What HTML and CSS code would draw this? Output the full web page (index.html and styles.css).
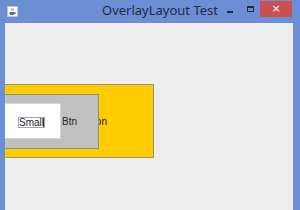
FILE: index.html
```html
<!DOCTYPE html>
<html>
<head>
<meta charset="utf-8">
<link rel="stylesheet" href="styles.css">
</head>
<body>
<div class="window">
  <div class="titlebar">
    <div class="app-icon">
      <svg width="11" height="11" viewBox="0 0 11 11">
        <rect x="0.5" y="0.5" width="10" height="10" fill="#ffffff" stroke="#b8c4dc"/>
        <path d="M5 2 C4 3 6 3.5 5 5" stroke="#e07a20" stroke-width="1" fill="none"/>
        <path d="M6.5 2.5 C5.8 3.3 7 3.8 6.3 4.8" stroke="#e07a20" stroke-width="0.8" fill="none"/>
        <path d="M2.5 6 H7.5 V7.5 C7.5 8.5 6.5 9 5 9 C3.5 9 2.5 8.5 2.5 7.5 Z" fill="#4a6fa8"/>
        <path d="M7.5 6.5 H8.6 V7.6 H7.5" stroke="#4a6fa8" stroke-width="0.8" fill="none"/>
      </svg>
    </div>
    <div class="title">OverlayLayout Test</div>
    <div class="controls">
      <div class="ctl min"><span class="dash"></span></div>
      <div class="ctl max"><span class="box"></span></div>
      <div class="ctl close">×</div>
    </div>
  </div>
  <div class="client">
    <div class="overlay">
      <div class="layer big"><span class="label">Button</span></div>
      <div class="layer mid"><span class="label">Btn</span></div>
      <div class="layer small"><span class="field">Small<span class="caret"></span></span></div>
    </div>
  </div>
</div>
</body>
</html>
```

FILE: styles.css
```css
* { box-sizing: border-box; }
html, body { margin: 0; padding: 0; }
body { width: 300px; height: 210px; overflow: hidden; font-family: "Liberation Sans", Arial, sans-serif; }

.window {
  width: 300px;
  height: 210px;
  background: #6b8ed5;
  display: flex;
  flex-direction: column;
}

.titlebar {
  height: 23px;
  display: flex;
  align-items: flex-start;
  flex: none;
}

.app-icon {
  width: 11px;
  height: 11px;
  margin: 6px 0 0 7px;
  display: flex;
}

.title {
  flex: 1;
  text-align: center;
  font-family: "Noto Sans", "Open Sans", sans-serif;
  font-size: 13px;
  line-height: 15px;
  margin-top: 3px;
  padding-left: 75px;
  color: #1f2b46;
  white-space: nowrap;
}

.controls {
  display: flex;
  align-items: flex-start;
  margin-right: 8px;
}

.ctl {
  display: flex;
  justify-content: flex-start;
}

.min {
  width: 20px;
  height: 16px;
  padding-top: 11px;
}
.min .dash {
  width: 6px;
  height: 2px;
  background: #1f2b46;
}

.max {
  width: 13px;
  height: 16px;
  padding-top: 6px;
}
.max .box {
  width: 7px;
  height: 6px;
  border: 1px solid #1f2b46;
  border-top-width: 2px;
}

.close {
  width: 32px;
  height: 16px;
  margin-top: 1px;
  background: #c9504f;
  color: #ffffff;
  justify-content: center;
  font-family: "DejaVu Sans", sans-serif;
  font-size: 11px;
  line-height: 15px;
}

.client {
  flex: 1;
  margin: 0 7px 0 5px;
  background: #eeeeee;
  overflow: hidden;
}

.overlay {
  display: grid;
  grid-template-columns: auto;
  grid-template-rows: 74px;
  margin-top: 61px;
  margin-left: -40px;
  width: 189px;
}

.layer {
  grid-area: 1 / 1;
  justify-self: start;
  align-self: center;
  display: flex;
  align-items: center;
  justify-content: flex-end;
  font-size: 10px;
  line-height: 12px;
  color: #1a1a1a;
}

.big {
  width: 189px;
  height: 74px;
  background: #ffcc00;
  border: 1px solid #9c9478;
  padding-right: 46px;
}
.big .label { padding-top: 2px; }

.mid {
  width: 134px;
  height: 55px;
  background: #c0c0c0;
  border: 1px solid #8e8e8e;
  padding-right: 21px;
}
.mid .label { padding-top: 2px; color: #262626; }

.small {
  width: 96px;
  height: 36px;
  background: #ffffff;
  border: 1px solid #d4d4d4;
  border-left: 0;
  padding-right: 15px;
}

.field {
  display: flex;
  align-items: center;
  height: 11px;
  width: 27px;
  border: 1px solid #8fa9d6;
  font-size: 10px;
  line-height: 9px;
  color: #1a1a1a;
  padding-left: 0;
  margin-top: 2px;
  overflow: hidden;
  white-space: nowrap;
}
.caret {
  width: 1px;
  height: 9px;
  background: #333333;
  flex: none;
  margin-left: -1px;
}
```
